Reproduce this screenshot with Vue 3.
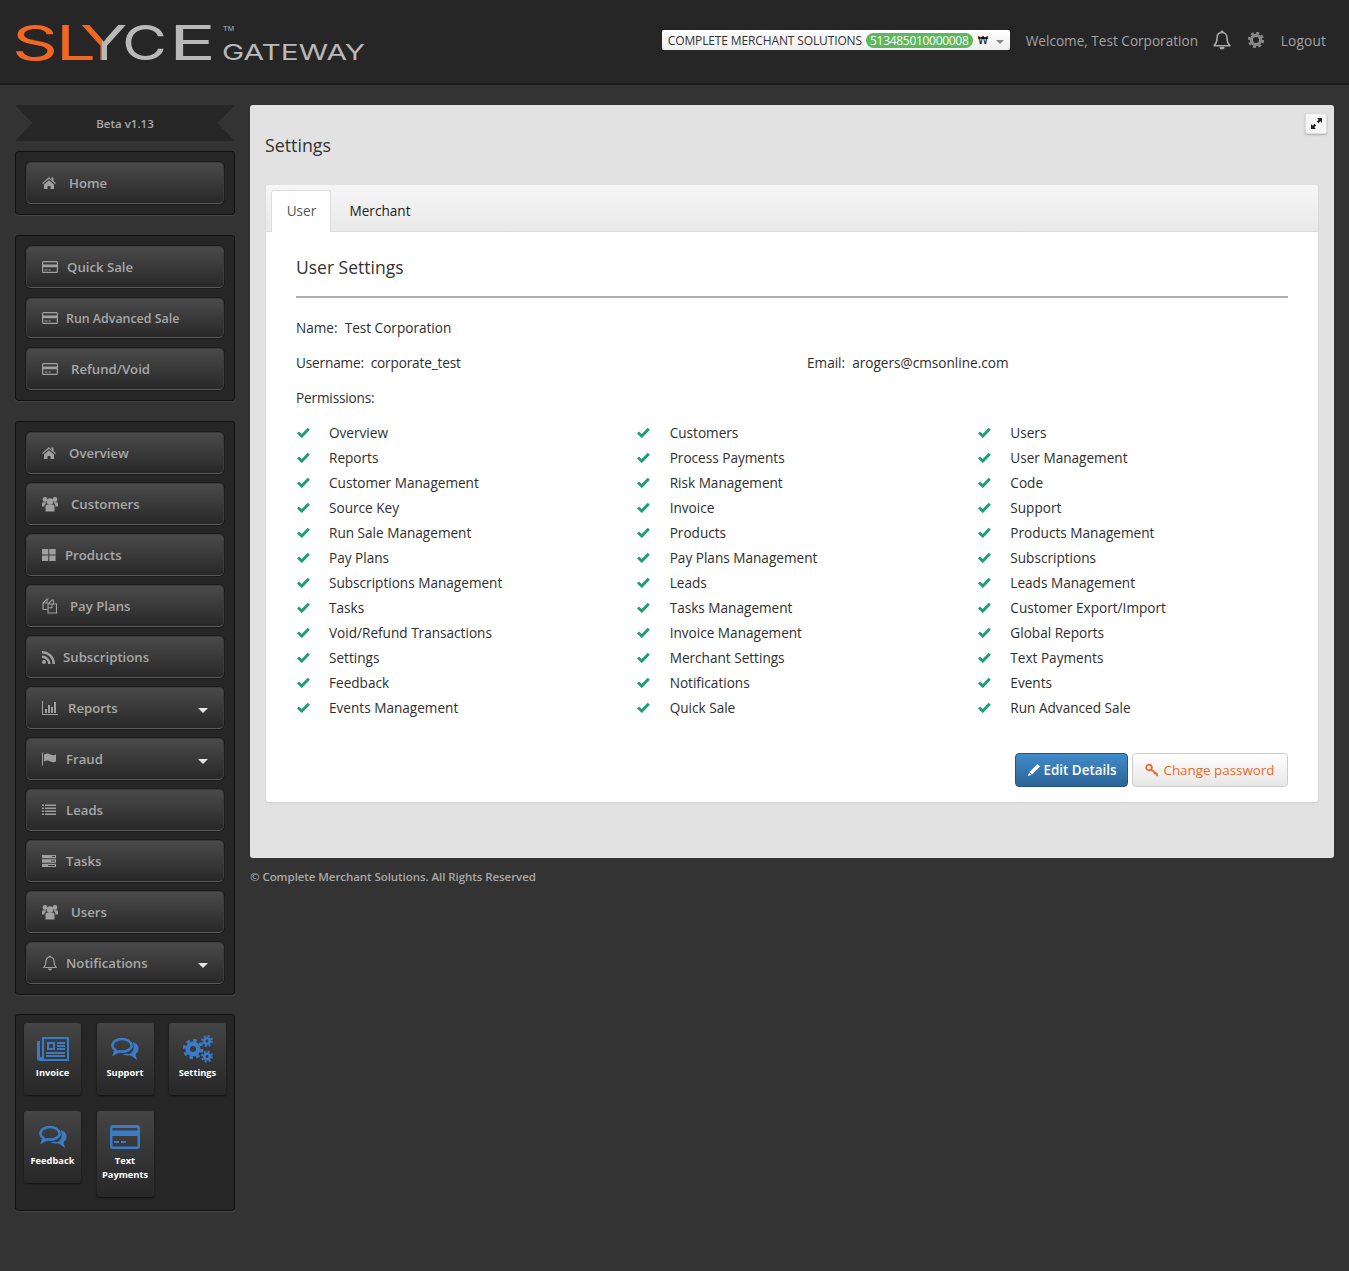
<script setup>
const icons = {
  home: '<path d="M7 2 0 8.200l.8.9L7 3.800l6.200 5.300.8-.9-2.500-2.200V2.500h-2v2.400z"/><path d="M2 9.500 7 5.200l5 4.300V14H8.500v-3h-3v3H2z"/>',
  card: '<path fill-rule="evenodd" d="M1.500 2h13A1.500 1.500 0 0 1 16 3.500v9a1.500 1.500 0 0 1-1.500 1.500h-13A1.500 1.500 0 0 1 0 12.500v-9A1.500 1.500 0 0 1 1.500 2zM1.200 3.200v2.300h13.600V3.200zm0 5v4.600h13.600V8.200z"/><path d="M2.500 10.500h3v1h-3zm4 0h2v1h-2z"/>',
  users: '<circle cx="8" cy="5.500" r="3.200"/><circle cx="3" cy="3.500" r="2.400"/><circle cx="13" cy="3.500" r="2.400"/><path d="M3.500 15.500V11q0-2.500 2.500-2.500h4q2.500 0 2.500 2.500v4.500z"/><path d="M0 10.500V8Q0 6.300 1.500 6.300H4.500L2.700 9v1.500zM16 10.500V8q0-1.700-1.500-1.700H11.500L13.300 9v1.500z"/>',
  grid: '<path d="M0 2h6.300v5.500H0zm7.300 0h6.300v5.500H7.300zM0 8.500h6.300V14H0zm7.300 0h6.300V14H7.300z"/>',
  copy: '<g fill="none" stroke="currentColor" stroke-width="1.100"><path d="M6.500 1H5L1 5v6.500h4.500"/><path d="M1 5h4V1M6 6h8.500v9H6zM6 6l4-4h1.500v4"/><path d="M6.200 9.800H10V6"/></g>',
  rss: '<circle cx="2" cy="13" r="2"/><path d="M0 6.500v2.400A6.100 6.100 0 0 1 6.100 15h2.400A8.500 8.500 0 0 0 0 6.500z"/><path d="M0 2v2.400A10.600 10.600 0 0 1 10.600 15H13A13 13 0 0 0 0 2z"/>',
  bars: '<path d="M0 1h1v13h15v1H0zM3 9h2v4H3zm3-4h2v8H6zm3 2h2v6H9zm3-5h2v11h-2z"/>',
  flag: '<path d="M0 1.500h1v13H0z"/><path d="M2 3.500c3-1.500 4.500-1 6.500 0s3.500.8 5.500 0v7c-2 .8-3.500 1-5.500 0s-3.500-1.500-6.500 0z"/>',
  list: '<path d="M0 2.500h2V4H0zm3 0h11V4H3zM0 5.500h2V7H0zm3 0h11V7H3zM0 8.500h2V10H0zm3 0h11V10H3zM0 11.500h2V13H0zm3 0h11V13H3z"/>',
  tasks: '<path fill-rule="evenodd" d="M0 2h14v3.300H0zM0 6.300h14v3.400H0zM0 10.700h14V14H0zM9 7.500v1h4v-1zM10 3v1h3V3zM6 12v1h7v-1z"/>',
  bell: '<path fill="none" stroke="currentColor" stroke-width="1.200" stroke-linejoin="round" d="M8 2c-2.800 0-4 2-4 4.500 0 3-.8 4.500-2.300 6h12.600c-1.500-1.500-2.300-3-2.300-6C12 4 10.800 2 8 2z"/><path d="M8 .5a1.200 1.200 0 0 1 1.200 1.500H6.800A1.200 1.200 0 0 1 8 .5zM6 13.500h4a2 2 0 0 1-4 0z"/>'
}

const navGroups = [
  { items: [{ label: 'Home', icon: 'home', x: 69 }] },
  {
    roomy: true,
    items: [
      { label: 'Quick Sale', icon: 'card', x: 67 },
      { label: 'Run Advanced Sale', icon: 'card', x: 66, small: true },
      { label: 'Refund/Void', icon: 'card', x: 71 }
    ]
  },
  {
    items: [
      { label: 'Overview', icon: 'home', x: 69 },
      { label: 'Customers', icon: 'users', x: 71 },
      { label: 'Products', icon: 'grid', x: 65 },
      { label: 'Pay Plans', icon: 'copy', x: 70 },
      { label: 'Subscriptions', icon: 'rss', x: 63 },
      { label: 'Reports', icon: 'bars', x: 68, caret: true },
      { label: 'Fraud', icon: 'flag', x: 66, caret: true },
      { label: 'Leads', icon: 'list', x: 66 },
      { label: 'Tasks', icon: 'tasks', x: 66 },
      { label: 'Users', icon: 'users', x: 71 },
      { label: 'Notifications', icon: 'bell', x: 66, caret: true }
    ]
  }
]

const permissions = [
  'Overview', 'Customers', 'Users',
  'Reports', 'Process Payments', 'User Management',
  'Customer Management', 'Risk Management', 'Code',
  'Source Key', 'Invoice', 'Support',
  'Run Sale Management', 'Products', 'Products Management',
  'Pay Plans', 'Pay Plans Management', 'Subscriptions',
  'Subscriptions Management', 'Leads', 'Leads Management',
  'Tasks', 'Tasks Management', 'Customer Export/Import',
  'Void/Refund Transactions', 'Invoice Management', 'Global Reports',
  'Settings', 'Merchant Settings', 'Text Payments',
  'Feedback', 'Notifications', 'Events',
  'Events Management', 'Quick Sale', 'Run Advanced Sale'
]
</script>

<template>
  <div class="page">
    <header class="topbar">
      <div class="logo">
        <svg width="352" height="62" viewBox="0 0 352 62">
          <defs>
            <linearGradient id="yfill" x1="0" y1="0" x2="1" y2="0">
              <stop offset="0.47" stop-color="#f26722" />
              <stop offset="0.47" stop-color="#b9b9b9" />
            </linearGradient>
          </defs>
          <text x="-3" y="40" class="logo-big" fill="#f26722" textLength="46" lengthAdjust="spacingAndGlyphs">S</text>
          <text x="41" y="40" class="logo-big" fill="#f26722" textLength="40" lengthAdjust="spacingAndGlyphs">L</text>
          <text x="65" y="40" class="logo-big" fill="url(#yfill)" textLength="47.500" lengthAdjust="spacingAndGlyphs">Y</text>
          <text x="107" y="40" class="logo-big" fill="#b9b9b9" textLength="45" lengthAdjust="spacingAndGlyphs">C</text>
          <text x="154" y="40" class="logo-big" fill="#b9b9b9" textLength="47" lengthAdjust="spacingAndGlyphs">E</text>
          <text x="208" y="11" class="logo-tm" fill="#b9b9b9" textLength="11" lengthAdjust="spacingAndGlyphs">TM</text>
          <text x="207" y="40" class="logo-sub" fill="#b9b9b9" textLength="143" lengthAdjust="spacingAndGlyphs">GATEWAY</text>
        </svg>
      </div>
      <div class="top-right">
        <div class="merchant">
          <span class="merchant-name">COMPLETE MERCHANT SOLUTIONS</span>
          <span class="merchant-id">513485010000008</span>
          <span class="merchant-won">₩</span>
          <span class="merchant-caret"></span>
        </div>
        <span class="welcome">Welcome, Test Corporation</span>
        <svg class="top-bell" width="20" height="22" viewBox="0 0 16 16" v-html="icons.bell"></svg>
        <svg class="top-gear" width="16" height="16" viewBox="0 0 16 16">
          <circle cx="8" cy="8" r="4.600" fill="none" stroke="currentColor" stroke-width="3.200" />
          <circle cx="8" cy="8" r="7" fill="none" stroke="currentColor" stroke-width="2.400" stroke-dasharray="3 2.500" />
        </svg>
        <span class="logout">Logout</span>
      </div>
    </header>

    <div class="layout">
      <aside class="sidebar">
        <div class="ribbon">Beta v1.13</div>
        <nav v-for="(group, g) in navGroups" :key="g" class="panel" :class="{ roomy: group.roomy }">
          <a v-for="item in group.items" :key="item.label" class="nav-btn" :class="{ small: item.small }">
            <svg class="nav-icon" viewBox="0 0 16 16" v-html="icons[item.icon]"></svg>
            <span class="nav-label" :style="{ marginLeft: item.x - 58 + 'px' }">{{ item.label }}</span>
            <span v-if="item.caret" class="nav-caret"></span>
          </a>
        </nav>
        <div class="panel tiles">
          <a class="tile">
            <svg width="32" height="24" viewBox="0 0 32 24">
              <path fill="#3a7bc8" fill-rule="evenodd" d="M5 0h27v24H3a3 3 0 0 1-3-3V4h3v16h2zM7 2v20h23V2z" />
              <path fill="#3a7bc8" d="M2 4h1v17H2z" />
              <path fill="#3a7bc8" fill-rule="evenodd" d="M10 5h8v8h-8zM12 7v4h4V7z" />
              <path fill="#3a7bc8" d="M20 5h8v2h-8zm0 3h8v2h-8zm0 3h8v2h-8zM9 15h19v2H9zm0 3h19v2H9z" />
            </svg>
            <span>Invoice</span>
          </a>
          <a class="tile">
            <svg width="28" height="24" viewBox="0 0 28 24">
              <path fill="none" stroke="#3a7bc8" stroke-width="2.600" d="M11 2C5.500 2 1.500 5 1.500 8.500c0 2 1.200 3.600 3 4.800L3.500 16.500l4-2.200c1 .2 2.200.3 3.500.3 5.500 0 9.500-2.700 9.500-6.100S16.500 2 11 2z" />
              <path fill="#3a7bc8" d="M22 5c3.500 1.300 5.500 3.500 5.500 6.500 0 2.500-1 4.500-3 5.500l1.500 6-6-4.500c-2.500.3-6.500 0-9-1.500 2 0 4-.3 5-.5l2 .7c4-1.500 5.500-5 4-11.200z" />
            </svg>
            <span>Support</span>
          </a>
          <a class="tile">
            <svg class="cog-icon" width="30" height="28" viewBox="0 0 30 28">
              <g fill="none" stroke="#3a7bc8">
                <circle cx="10" cy="14" r="5.200" stroke-width="4.400" />
                <circle cx="10" cy="14" r="8.700" stroke-width="3" stroke-dasharray="3.500 3.330" />
                <circle cx="24" cy="6" r="2.700" stroke-width="2.600" />
                <circle cx="24" cy="6" r="5" stroke-width="2" stroke-dasharray="2 1.930" />
                <circle cx="24" cy="21.500" r="2.700" stroke-width="2.600" />
                <circle cx="24" cy="21.500" r="5" stroke-width="2" stroke-dasharray="2 1.930" />
              </g>
            </svg>
            <span>Settings</span>
          </a>
          <a class="tile">
            <svg width="28" height="24" viewBox="0 0 28 24">
              <path fill="none" stroke="#3a7bc8" stroke-width="2.600" d="M11 2C5.500 2 1.500 5 1.500 8.500c0 2 1.200 3.600 3 4.800L3.500 16.500l4-2.200c1 .2 2.200.3 3.500.3 5.500 0 9.500-2.700 9.500-6.100S16.500 2 11 2z" />
              <path fill="#3a7bc8" d="M22 5c3.500 1.300 5.500 3.500 5.500 6.500 0 2.500-1 4.500-3 5.500l1.500 6-6-4.500c-2.500.3-6.500 0-9-1.500 2 0 4-.3 5-.5l2 .7c4-1.500 5.500-5 4-11.200z" />
            </svg>
            <span>Feedback</span>
          </a>
          <a class="tile tall">
            <svg width="30" height="24" viewBox="0 0 30 24">
              <path fill="#3a7bc8" fill-rule="evenodd" d="M3 0h24a3 3 0 0 1 3 3v18a3 3 0 0 1-3 3H3a3 3 0 0 1-3-3V3a3 3 0 0 1 3-3zM2.500 3v2.500h25V3zm0 8v10.500h25V11z" />
              <path fill="#3a7bc8" d="M4 16h5v2H4zm7 0h5v2h-5z" />
            </svg>
            <span>Text Payments</span>
          </a>
        </div>
      </aside>

      <main class="main">
        <section class="content">
          <button class="expand" aria-label="Expand">
            <svg width="11" height="11" viewBox="0 0 10 10">
              <path fill="#222" d="M5.500 0H10v4.500L8.500 3 6.800 4.700 5.300 3.200 7 1.500zM4.500 10H0V5.500L1.500 7l1.700-1.700 1.500 1.500L3 8.500z" />
            </svg>
          </button>
          <h1 class="title">Settings</h1>
          <div class="card">
            <div class="tabs">
              <span class="tab active">User</span>
              <span class="tab">Merchant</span>
            </div>
            <div class="card-body">
              <h2 class="card-title">User Settings</h2>
              <hr class="rule" />
              <p class="field">Name:&nbsp; Test Corporation</p>
              <div class="field two">
                <span class="tight">Username:&nbsp; corporate_test</span>
                <span>Email:&nbsp; arogers@cmsonline.com</span>
              </div>
              <p class="field tight">Permissions:</p>
              <ul class="perms">
                <li v-for="(p, i) in permissions" :key="i" class="perm">
                  <svg width="13" height="11" viewBox="0 0 13 11">
                    <path fill="none" stroke="#1f9d78" stroke-width="3" d="M1 5.500 4.800 9 11.800 1.800" />
                  </svg>
                  <span>{{ p }}</span>
                </li>
              </ul>
              <div class="actions">
                <button class="btn primary">
                  <svg width="14" height="14" viewBox="0 0 14 14">
                    <path fill="#fff" d="M10.500 1 13 3.500 5 11.500l-2.500-2.500zM2 9.800 4.300 12 .8 13z" />
                  </svg>
                  Edit Details
                </button>
                <button class="btn plain">
                  <svg width="14" height="14" viewBox="0 0 14 14">
                    <circle cx="4" cy="4.500" r="2.800" fill="none" stroke="#f26722" stroke-width="1.800" />
                    <path fill="none" stroke="#f26722" stroke-width="1.800" d="M6 6.500l6.500 5M10 9.500 9 11M12.500 11.500l-1 1.500" />
                  </svg>
                  Change password
                </button>
              </div>
            </div>
          </div>
        </section>
        <footer class="footer">© Complete Merchant Solutions. All Rights Reserved</footer>
      </main>
    </div>
  </div>
</template>

<style>
html, body { margin: 0; background: #333; }
</style>

<style scoped>
.page {
  width: 1349px;
  min-height: 1271px;
  background: #333;
  font-family: "Open Sans", "Noto Sans", sans-serif;
  font-size: 13.6px;
  color: #2e2e2e;
}
.topbar {
  height: 83px;
  background: #262626;
  border-bottom: 2px solid #1b1b1b;
  display: flex;
  justify-content: space-between;
  align-items: flex-start;
  overflow: hidden;
}
.logo { padding: 20px 0 0 15px; line-height: 0; }
.logo-big { font-family: "Inter", sans-serif; font-size: 48px; font-weight: 400; }
.logo-tm { font-family: "Liberation Sans", sans-serif; font-size: 7px; }
.logo-sub { font-family: "Inter", sans-serif; font-size: 22px; font-weight: 400; }
.top-right {
  display: flex;
  align-items: center;
  height: 20px;
  margin-top: 30px;
  padding-right: 23px;
  color: #a3a3a3;
}
.merchant {
  width: 348px;
  height: 20px;
  box-sizing: border-box;
  padding-left: 6px;
  background: linear-gradient(#fff, #eee);
  border-radius: 2px;
  display: flex;
  align-items: center;
  color: #333;
  font-size: 12px;
  white-space: nowrap;
}
.merchant-name { width: 195px; letter-spacing: -0.13px; }
.merchant-id {
  margin-left: 3px;
  width: 107px;
  box-sizing: border-box;
  text-align: center;
  background: #5cb85c;
  color: #fff;
  border-radius: 8px;
  line-height: 15px;
  letter-spacing: -0.3px;
}
.merchant-won { margin-left: 5px; color: #000; font-size: 10.500px; font-family: "DejaVu Sans", sans-serif; }
.merchant-caret {
  margin-left: 8px;
  margin-top: 3px;
  border-left: 4px solid transparent;
  border-right: 4px solid transparent;
  border-top: 4px solid #888;
}
.welcome { margin-left: 16px; width: 172px; white-space: nowrap; }
.top-bell { margin-left: 14px; fill: currentColor; color: #aaa; }
.top-gear { margin-left: 16px; color: #888; }
.logout { margin-left: 17px; letter-spacing: 0.2px; }

.layout { display: flex; gap: 15px; padding: 20px 15px 0; }
.sidebar { width: 220px; flex: none; display: flex; flex-direction: column; gap: 20px; }
.ribbon {
  height: 36px;
  margin-bottom: -10px;
  background: #262626;
  clip-path: polygon(0 0, 100% 0, 92% 50%, 100% 100%, 0 100%, 8% 50%);
  color: #aaa;
  font-size: 11.500px;
  font-weight: 600;
  line-height: 38px;
  text-align: center;
}
.panel {
  background: #262626;
  border: 1px solid #111;
  border-radius: 3px;
  box-sizing: border-box;
  padding: 10px;
  display: flex;
  flex-direction: column;
  gap: 9px;
  box-shadow: 0 1px 0 #444;
}
.panel.roomy { gap: 10px; }
.nav-btn {
  height: 42px;
  box-sizing: border-box;
  padding: 0 15px;
  display: flex;
  align-items: center;
  background: linear-gradient(#4a4a4a, #282828);
  border: 1px solid #3c3c3c;
  border-bottom-color: #5a5a5a;
  border-radius: 5px;
  box-shadow: 0 0 0 1px #1c1c1c;
  color: #a8a8a8;
  font-size: 13.200px;
  font-weight: 600;
  white-space: nowrap;
}
.nav-btn.small { height: 40px; font-size: 12.400px; }
.nav-icon { width: 16px; height: 16px; flex: none; fill: currentColor; color: #a0a0a0; }
.nav-caret {
  margin-left: auto;
  margin-top: 4px;
  border-left: 5px solid transparent;
  border-right: 5px solid transparent;
  border-top: 5px solid #e8e8e8;
}
.tiles {
  height: 197px;
  margin-top: -1px;
  padding: 8px;
  display: grid;
  grid-template-columns: repeat(3, 57px);
  grid-auto-rows: min-content;
  column-gap: 15.500px;
  row-gap: 16px;
}
.tile {
  height: 72px;
  box-sizing: border-box;
  padding-top: 14px;
  display: flex;
  flex-direction: column;
  align-items: center;
  background: linear-gradient(#444, #272727);
  border-radius: 3px;
  box-shadow: 0 1px 2px #111;
  color: #fff;
  font-size: 9.300px;
  font-weight: 700;
  line-height: 14px;
  text-align: center;
}
.tile span { margin-top: 5px; }
.tile.tall { height: 86px; }
.cog-icon { margin: -2px 0; }

.main { width: 1084px; }
.content {
  position: relative;
  height: 753px;
  box-sizing: border-box;
  padding: 28px 16px 0;
  background: #e2e2e2;
  border-radius: 3px;
}
.expand {
  position: absolute;
  top: 8px;
  right: 7px;
  width: 22px;
  height: 21px;
  padding: 0;
  border: 1px solid #ddd;
  border-radius: 2px;
  background: #f6f6f6;
  box-shadow: 0 1px 2px #aaa;
  display: flex;
  align-items: center;
  justify-content: center;
}
.title { margin: 0 0 27px -1px; font-size: 17.800px; font-weight: 400; line-height: 25px; color: #333; }
.card { background: #fff; border-radius: 3px; box-shadow: 0 1px 2px #ccc; height: 617px; }
.tabs {
  height: 47px;
  box-sizing: border-box;
  padding: 5px 0 0 5px;
  display: flex;
  background: linear-gradient(#f6f6f6, #e9e9e9);
  border-bottom: 1px solid #ddd;
  border-radius: 3px 3px 0 0;
}
.tab { padding: 0 15px; margin-right: 3.500px; line-height: 42px; color: #222; }
.tab.active {
  background: #fff;
  color: #555;
  border: 1px solid #ddd;
  border-bottom: 0;
  border-radius: 3px 3px 0 0;
  height: 42px;
  box-sizing: border-box;
  line-height: 40px;
  width: 60px;
  padding: 0 0 0 1px;
  text-align: center;
}
.card-body { padding: 20px 30px 0; }
.card-title { margin: 0; font-size: 17.500px; font-weight: 400; line-height: 30px; color: #333; }
.rule { margin: 14px 0 20px; height: 2px; border: 0; background: #b0b0b0; }
.field { margin: 0 0 15px; line-height: 20px; }
.tight { letter-spacing: -0.15px; }
.two { display: grid; grid-template-columns: 511px 1fr; }
.perms {
  margin: -3px 0 0;
  padding: 0;
  list-style: none;
  width: 1022px;
  display: grid;
  grid-template-columns: repeat(3, 1fr);
  grid-auto-rows: 25px;
}
.perm { display: flex; align-items: center; }
.perm svg { width: 13px; margin-left: 0.5px; margin-right: 19.500px; flex: none; }
.actions { margin-top: 33px; display: flex; justify-content: flex-end; gap: 4px; }
.btn {
  height: 34px;
  box-sizing: border-box;
  padding: 0;
  border-radius: 4px;
  font-family: inherit;
  font-size: 13.400px;
  display: flex;
  align-items: center;
  justify-content: center;
  gap: 3px;
}
.primary {
  width: 113px;
  background: linear-gradient(#428bca, #2a6496);
  border: 1px solid #245580;
  color: #fff;
  font-weight: 600;
}
.plain {
  width: 156px;
  gap: 4px;
  background: linear-gradient(#fff, #e6e6e6);
  border: 1px solid #ccc;
  color: #f26722;
}
.footer { margin-top: 11px; color: #a8a8a8; font-size: 11.500px; font-weight: 600; letter-spacing: -0.06px; line-height: 16px; }
</style>
